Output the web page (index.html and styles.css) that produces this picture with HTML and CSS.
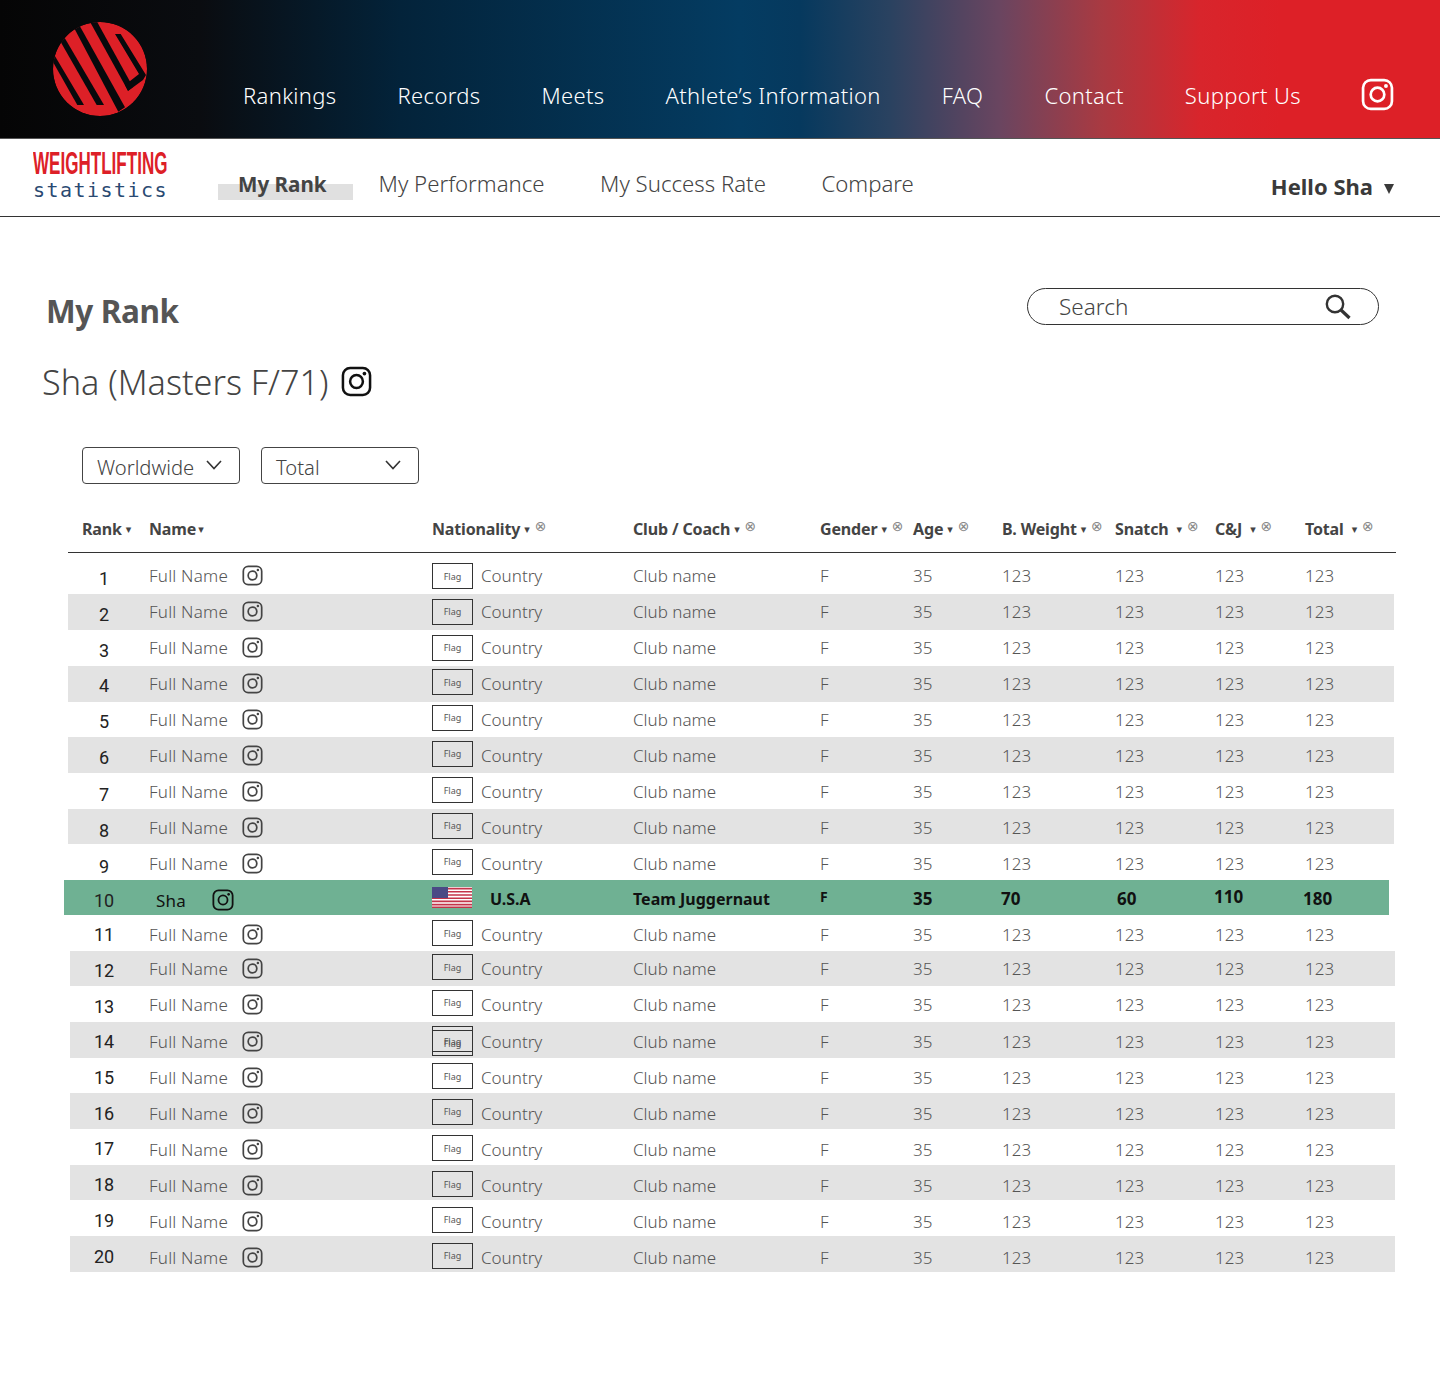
FILE: index.html
```html
<!DOCTYPE html>
<html lang="en">
<head>
    <meta charset="UTF-8">
    <meta name="viewport" content="width=device-width, initial-scale=1.0">
    <title>Weightlifting Statistics - My Rank</title>
    <link rel="stylesheet" href="styles.css">
</head>
<body>
    <svg class="defs" width="0" height="0" aria-hidden="true">
        <symbol id="ig" viewBox="0 0 32 32">
            <rect x="2" y="2" width="28" height="28" rx="7.5" fill="none" stroke="currentColor" stroke-width="2.6"/>
            <circle cx="16" cy="16" r="6.6" fill="none" stroke="currentColor" stroke-width="2.6"/>
            <circle cx="24.2" cy="7.8" r="1.9" fill="currentColor"/>
        </symbol>
    </svg>

    <header class="topbar">
        <svg class="logo" viewBox="53 22 94 94" width="94" height="94">
            <defs><clipPath id="disc"><circle cx="100" cy="69" r="47"/></clipPath></defs>
            <g clip-path="url(#disc)">
                <circle cx="100" cy="69" r="47" fill="#dd2027"/>
                <polygon points="49,55 52,51 84,105 77.3,105" fill="#07090c"/>
                <polygon points="59,39 63,35 104,105 96.7,105" fill="#07090c"/>
                <polygon points="72,24 77,21 125,107.3 118.3,111.7" fill="#07090c"/>
                <polygon points="89,20 95,18 133,87 128,90.7" fill="#07090c"/>
                <polygon points="115,34 120.7,34 146,75 143,80 128,91 125,85 139,74" fill="#07090c"/>
            </g>
        </svg>
        <nav class="mainnav">
            <a>Rankings</a>
            <a>Records</a>
            <a>Meets</a>
            <a>Athlete’s Information</a>
            <a>FAQ</a>
            <a>Contact</a>
            <a>Support Us</a>
        </nav>
        <svg class="ig ig--top"><use href="#ig"/></svg>
    </header>

    <div class="subbar">
        <div class="brand">
            <div class="brand-top">WEIGHTLIFTING</div>
            <div class="brand-sub">statistics</div>
        </div>
        <nav class="subnav">
            <a class="active">My Rank</a>
            <a>My Performance</a>
            <a>My Success Rate</a>
            <a>Compare</a>
        </nav>
        <div class="hello">Hello Sha <span class="hello-caret"></span></div>
    </div>

    <main>
        <div class="title-row">
            <h1>My Rank</h1>
            <div class="search">
                <span>Search</span>
                <svg width="26" height="26" viewBox="0 0 26 26">
                    <circle cx="10" cy="10" r="8.2" fill="none" stroke="#333" stroke-width="2.4"/>
                    <path d="M16 16 L24.5 24" stroke="#333" stroke-width="3.2"/>
                </svg>
            </div>
        </div>

        <h2>Sha (Masters F/71) <svg class="ig ig--title"><use href="#ig"/></svg></h2>

        <div class="filters">
            <div class="select">Worldwide<svg width="16" height="10" viewBox="0 0 16 10"><path d="M1 1 L8 8.5 L15 1" fill="none" stroke="#333" stroke-width="1.6"/></svg></div>
            <div class="select">Total<svg width="16" height="10" viewBox="0 0 16 10"><path d="M1 1 L8 8.5 L15 1" fill="none" stroke="#333" stroke-width="1.6"/></svg></div>
        </div>

        <div class="table">
            <div class="row row--head">
                <div class="th th--rank">Rank<i>▾</i></div>
                <div class="th th--name">Name<i>▾</i></div>
                <div class="th">Nationality<i>▾</i><b>⊗</b></div>
                <div class="th">Club / Coach<i>▾</i><b>⊗</b></div>
                <div class="th">Gender<i>▾</i><b>⊗</b></div>
                <div class="th">Age<i>▾</i><b>⊗</b></div>
                <div class="th">B. Weight<i>▾</i><b>⊗</b></div>
                <div class="th th--wide">Snatch<i>▾</i><b>⊗</b></div>
                <div class="th th--wide">C&amp;J<i>▾</i><b>⊗</b></div>
                <div class="th th--wide">Total<i>▾</i><b>⊗</b></div>
            </div>

            <div class="row row--up"><span class="rank">1</span><div class="name">Full Name<svg class="ig"><use href="#ig"/></svg></div><div class="nat"><span class="flag">Flag</span>Country</div><span>Club name</span><span>F</span><span>35</span><span>123</span><span>123</span><span>123</span><span>123</span></div>
            <div class="row row--alt row--up"><span class="rank">2</span><div class="name">Full Name<svg class="ig"><use href="#ig"/></svg></div><div class="nat"><span class="flag">Flag</span>Country</div><span>Club name</span><span>F</span><span>35</span><span>123</span><span>123</span><span>123</span><span>123</span></div>
            <div class="row row--up"><span class="rank">3</span><div class="name">Full Name<svg class="ig"><use href="#ig"/></svg></div><div class="nat"><span class="flag">Flag</span>Country</div><span>Club name</span><span>F</span><span>35</span><span>123</span><span>123</span><span>123</span><span>123</span></div>
            <div class="row row--alt"><span class="rank">4</span><div class="name">Full Name<svg class="ig"><use href="#ig"/></svg></div><div class="nat"><span class="flag">Flag</span>Country</div><span>Club name</span><span>F</span><span>35</span><span>123</span><span>123</span><span>123</span><span>123</span></div>
            <div class="row"><span class="rank">5</span><div class="name">Full Name<svg class="ig"><use href="#ig"/></svg></div><div class="nat"><span class="flag">Flag</span>Country</div><span>Club name</span><span>F</span><span>35</span><span>123</span><span>123</span><span>123</span><span>123</span></div>
            <div class="row row--alt"><span class="rank">6</span><div class="name">Full Name<svg class="ig"><use href="#ig"/></svg></div><div class="nat"><span class="flag">Flag</span>Country</div><span>Club name</span><span>F</span><span>35</span><span>123</span><span>123</span><span>123</span><span>123</span></div>
            <div class="row row--down"><span class="rank">7</span><div class="name">Full Name<svg class="ig"><use href="#ig"/></svg></div><div class="nat"><span class="flag">Flag</span>Country</div><span>Club name</span><span>F</span><span>35</span><span>123</span><span>123</span><span>123</span><span>123</span></div>
            <div class="row row--alt row--down"><span class="rank">8</span><div class="name">Full Name<svg class="ig"><use href="#ig"/></svg></div><div class="nat"><span class="flag">Flag</span>Country</div><span>Club name</span><span>F</span><span>35</span><span>123</span><span>123</span><span>123</span><span>123</span></div>
            <div class="row row--down"><span class="rank">9</span><div class="name">Full Name<svg class="ig"><use href="#ig"/></svg></div><div class="nat"><span class="flag">Flag</span>Country</div><span>Club name</span><span>F</span><span>35</span><span>123</span><span>123</span><span>123</span><span>123</span></div>

            <div class="row row--me">
                <span class="rank">10</span>
                <div class="name">Sha<svg class="ig"><use href="#ig"/></svg></div>
                <div class="nat">
                    <svg class="us-flag" width="40" height="21" viewBox="0 0 40 21">
                        <rect width="40" height="21" fill="#fff"/>
                        <path d="M0 1.6H40M0 4.8H40M0 8H40M0 11.2H40M0 14.4H40M0 17.6H40M0 20.2H40" stroke="#c4344a" stroke-width="1.6"/>
                        <rect width="16" height="11" fill="#4a4a85"/>
                    </svg>
                    U.S.A
                </div>
                <span class="me-club">Team Juggernaut</span><span class="me-f">F</span><span>35</span><span class="me-bw">70</span><span class="me-sn">60</span><span class="me-cj">110</span><span class="me-tot">180</span>
            </div>

            <div class="row row--low"><span class="rank">11</span><div class="name">Full Name<svg class="ig"><use href="#ig"/></svg></div><div class="nat"><span class="flag">Flag</span>Country</div><span>Club name</span><span>F</span><span>35</span><span>123</span><span>123</span><span>123</span><span>123</span></div>
            <div class="row row--alt row--late"><span class="rank">12</span><div class="name">Full Name<svg class="ig"><use href="#ig"/></svg></div><div class="nat"><span class="flag">Flag</span>Country</div><span>Club name</span><span>F</span><span>35</span><span>123</span><span>123</span><span>123</span><span>123</span></div>
            <div class="row"><span class="rank">13</span><div class="name">Full Name<svg class="ig"><use href="#ig"/></svg></div><div class="nat"><span class="flag">Flag</span>Country</div><span>Club name</span><span>F</span><span>35</span><span>123</span><span>123</span><span>123</span><span>123</span></div>
            <div class="row row--alt row--late row--low"><span class="rank">14</span><div class="name">Full Name<svg class="ig"><use href="#ig"/></svg></div><div class="nat"><span class="flag flag--double">Flag<span class="flag-ghost">Flag</span></span>Country</div><span>Club name</span><span>F</span><span>35</span><span>123</span><span>123</span><span>123</span><span>123</span></div>
            <div class="row row--low"><span class="rank">15</span><div class="name">Full Name<svg class="ig"><use href="#ig"/></svg></div><div class="nat"><span class="flag">Flag</span>Country</div><span>Club name</span><span>F</span><span>35</span><span>123</span><span>123</span><span>123</span><span>123</span></div>
            <div class="row row--alt row--late row--low"><span class="rank">16</span><div class="name">Full Name<svg class="ig"><use href="#ig"/></svg></div><div class="nat"><span class="flag">Flag</span>Country</div><span>Club name</span><span>F</span><span>35</span><span>123</span><span>123</span><span>123</span><span>123</span></div>
            <div class="row row--lower"><span class="rank">17</span><div class="name">Full Name<svg class="ig"><use href="#ig"/></svg></div><div class="nat"><span class="flag">Flag</span>Country</div><span>Club name</span><span>F</span><span>35</span><span>123</span><span>123</span><span>123</span><span>123</span></div>
            <div class="row row--alt row--late row--lower"><span class="rank">18</span><div class="name">Full Name<svg class="ig"><use href="#ig"/></svg></div><div class="nat"><span class="flag">Flag</span>Country</div><span>Club name</span><span>F</span><span>35</span><span>123</span><span>123</span><span>123</span><span>123</span></div>
            <div class="row row--lower"><span class="rank">19</span><div class="name">Full Name<svg class="ig"><use href="#ig"/></svg></div><div class="nat"><span class="flag">Flag</span>Country</div><span>Club name</span><span>F</span><span>35</span><span>123</span><span>123</span><span>123</span><span>123</span></div>
            <div class="row row--alt row--late row--lower"><span class="rank">20</span><div class="name">Full Name<svg class="ig"><use href="#ig"/></svg></div><div class="nat"><span class="flag">Flag</span>Country</div><span>Club name</span><span>F</span><span>35</span><span>123</span><span>123</span><span>123</span><span>123</span></div>
        </div>
    </main>
</body>
</html>
```
FILE: styles.css
```css
body {
    margin: 0;
    min-height: 1378px;
    background: #fff;
    color: #555;
    font-family: "Noto Sans", "Open Sans", sans-serif;
    overflow-x: hidden;
}

.defs {
    position: absolute;
}

.ig {
    width: 21px;
    height: 21px;
    color: #444;
    flex: none;
}

/* top gradient bar */
.topbar {
    height: 138px;
    border-bottom: 1px solid #555;
    display: flex;
    align-items: flex-start;
    background: linear-gradient(90deg, #050505 0, #0a0c10 200px, #03233a 400px, #043c62 740px, #06395e 800px, #2a4260 890px, #6a4560 1000px, #a83a42 1100px, #d8252c 1200px, #dd2027 1280px, #dd2027 100%);
}

.logo {
    margin: 22px 0 0 53px;
    flex: none;
}

.mainnav {
    display: flex;
    gap: 61px;
    margin: 79px 0 0 96px;
}

.mainnav a {
    color: #fff;
    font-size: 22px;
    line-height: 32px;
    font-weight: 300;
    letter-spacing: 0.35px;
}

.ig--top {
    width: 33px;
    height: 33px;
    color: #fff;
    margin: 78px 0 0 60px;
}

/* second bar */
.subbar {
    height: 77px;
    border-bottom: 1px solid #333;
    display: flex;
    align-items: flex-start;
}

.brand {
    width: 186px;
    padding: 11px 0 0 33px;
    box-sizing: border-box;
}

.brand-top {
    color: #dd2027;
    font-family: "Liberation Sans", sans-serif;
    font-weight: 700;
    font-size: 31px;
    line-height: 28px;
    width: 134px;
    white-space: nowrap;
    transform: scaleX(0.55);
    transform-origin: left center;
}

.brand-sub {
    color: #2a4a72;
    font-family: "DejaVu Sans Mono", monospace;
    font-size: 20px;
    line-height: 24px;
    letter-spacing: 1.45px;
}

.subnav {
    display: flex;
    margin-left: 32px;
    margin-top: 29px;
    font-size: 22.2px;
    line-height: 32px;
    color: #444;
}

.subnav a {
    margin-right: 55.5px;
    font-weight: 300;
}

.subnav .active {
    font-weight: 700;
    font-size: 20.6px;
    margin-right: 26px;
    padding: 0 26px 0 20px;
    background: linear-gradient(#e0e0e0, #e0e0e0) no-repeat 0 16px;
}

.hello {
    margin-left: auto;
    margin-right: 46px;
    margin-top: 31px;
    font-size: 22px;
    line-height: 32px;
    font-weight: 700;
    color: #3a3a3a;
    display: flex;
    align-items: center;
    gap: 11px;
}

.hello-caret {
    border-left: 5px solid transparent;
    border-right: 5px solid transparent;
    border-top: 10px solid #3a3a3a;
    margin-top: 5px;
}

/* page content */
.title-row {
    display: flex;
    justify-content: space-between;
    align-items: flex-start;
    padding: 71px 61px 0 46px;
}

h1 {
    margin: 0;
    font-size: 31.5px;
    line-height: 46px;
    font-weight: 700;
    letter-spacing: -0.4px;
    color: #555;
}

.search {
    width: 352px;
    height: 37px;
    box-sizing: border-box;
    border: 1px solid #333;
    border-radius: 19px;
    display: flex;
    align-items: center;
    justify-content: space-between;
    padding: 0 27px 0 31px;
    font-size: 22.5px;
    font-weight: 300;
    color: #444;
}

h2 {
    margin: 23px 0 0 42px;
    font-size: 34.2px;
    line-height: 50px;
    font-weight: 300;
    color: #444;
    display: flex;
    align-items: center;
    gap: 12px;
}

.ig--title {
    width: 31px;
    height: 31px;
    color: #111;
    margin-top: -2px;
}

.filters {
    display: flex;
    gap: 21px;
    margin: 40px 0 0 82px;
}

.select {
    width: 158px;
    height: 37px;
    box-sizing: border-box;
    border: 1px solid #444;
    border-radius: 4px;
    padding: 2px 17px 0 14px;
    display: flex;
    align-items: center;
    justify-content: space-between;
    font-size: 20.2px;
    font-weight: 300;
    color: #444;
}

.select svg {
    margin-top: -4px;
}

/* table */
.table {
    margin: 34px 44px 0 68px;
}

.row {
    display: grid;
    grid-template-columns: 81px 283px 201px 187px 93px 89px 113px 100px 90px 1fr;
    align-items: center;
    height: 35.7px;
    font-size: 17px;
    font-weight: 300;
    color: #555;
}

.row--head {
    height: 34px;
    margin-bottom: 5.8px;
    border-bottom: 1px solid #333;
    align-items: start;
    font-size: 16px;
    font-weight: 700;
    letter-spacing: -0.15px;
    color: #444;
}

.th {
    display: flex;
    align-items: baseline;
    line-height: 22px;
}

.th i {
    font-style: normal;
    font-family: "DejaVu Sans", sans-serif;
    font-size: 11px;
    margin-left: 4px;
    transform: translateY(-2px);
}

.th b {
    font-family: "DejaVu Sans", sans-serif;
    font-weight: 400;
    font-size: 14px;
    color: #888;
    margin-left: 5px;
    transform: translateY(-4px);
}

.th--rank {
    margin-left: 14px;
}

.th--name i {
    margin-left: 2px;
}

.th--wide i {
    margin-left: 8px;
}

.rank {
    font-family: Roboto, sans-serif;
    font-weight: 400;
    font-size: 18px;
    color: #222;
    text-align: center;
    width: 72px;
    margin-top: 4px;
}

/* the rows of the design do not sit on an even grid, these nudge the cells */
.row--up > :not(.rank) {
    margin-bottom: 2px;
}

.row--up .flag {
    margin-top: 1px;
}

.row--down > :not(.rank) {
    margin-top: 2px;
}

.row--down .rank {
    margin-top: 8px;
}

.row--low > :not(.rank) {
    margin-top: 4px;
}

.row--lower > :not(.rank) {
    margin-top: 6px;
}

.name {
    display: flex;
    align-items: center;
    justify-content: space-between;
    width: 114px;
    letter-spacing: 0.2px;
}

.nat {
    display: flex;
    align-items: center;
    gap: 8px;
}

.flag {
    position: relative;
    width: 41px;
    height: 26px;
    box-sizing: border-box;
    border: 1px solid #333;
    display: flex;
    align-items: center;
    justify-content: center;
    font-size: 9px;
    font-weight: 400;
    color: #555;
    margin-top: -3px;
}

.flag--double {
    height: 30px;
    margin-top: -1px;
}

.flag--double::before {
    content: "";
    position: absolute;
    left: 0;
    right: 0;
    top: 3px;
    bottom: 3px;
    border-top: 1px solid #333;
    border-bottom: 1px solid #333;
}

.flag-ghost {
    position: absolute;
    left: 0;
    right: 0;
    top: 10px;
    text-align: center;
}

.row--alt {
    background: linear-gradient(#e3e3e3, #e3e3e3) no-repeat;
    background-size: 1326px 100%;
}

.row--late {
    background-size: 1325px 100%;
    background-position: 2px 0;
}

.row--me {
    margin: 0 7px 0 -4px;
    padding: 3px 0 0 4px;
    box-sizing: border-box;
    background: #6fb193;
    color: #111;
    font-weight: 700;
    height: 35px;
}

.row--me .name {
    margin: 3px 0 0 7px;
    width: 78px;
    font-weight: 400;
}

.row--me .ig {
    width: 22px;
    height: 22px;
    color: #111;
}

.row--me .nat {
    gap: 18px;
    font-size: 16px;
}

.us-flag {
    flex: none;
    margin-top: -3px;
}

.me-club {
    font-size: 16px;
}

.me-f {
    font-size: 14px;
    margin-top: -4px;
}

.me-bw {
    margin-left: -1px;
}

.me-sn {
    margin-left: 2px;
}

.me-cj {
    margin-left: -1px;
    margin-top: -4px;
}

.me-tot {
    margin-left: -2px;
}
```
